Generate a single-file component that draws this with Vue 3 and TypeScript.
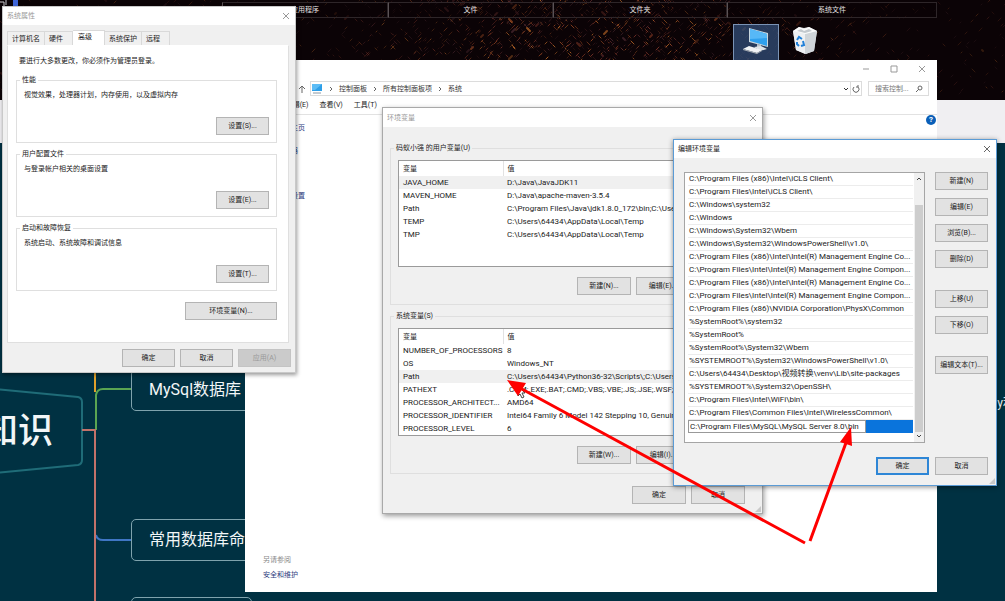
<script setup lang="ts">
import { ref } from 'vue'

interface Variable { name: string; value: string; selected?: boolean }
interface VariableGroup { legend: string; rows: Variable[]; actions: string[] }
interface Spark { d: string; color: string; opacity: number; width: number }

const fences = ['应用程序', '文件', '文件夹', '系统文件']

const tabs = ['计算机名', '硬件', '高级', '系统保护', '远程']
const activeTab = ref('高级')

const sections = [
  { title: '性能', text: '视觉效果，处理器计划，内存使用，以及虚拟内存', action: '设置(S)...' },
  { title: '用户配置文件', text: '与登录帐户相关的桌面设置', action: '设置(E)...' },
  { title: '启动和故障恢复', text: '系统启动、系统故障和调试信息', action: '设置(T)...' },
]

const groups: VariableGroup[] = [
  {
    legend: '码蚁小强 的用户变量(U)',
    rows: [
      { name: 'JAVA_HOME', value: 'D:\\Java\\JavaJDK11', selected: true },
      { name: 'MAVEN_HOME', value: 'D:\\Java\\apache-maven-3.5.4' },
      { name: 'Path', value: 'C:\\Program Files\\Java\\jdk1.8.0_172\\bin;C:\\Users' },
      { name: 'TEMP', value: 'C:\\Users\\64434\\AppData\\Local\\Temp' },
      { name: 'TMP', value: 'C:\\Users\\64434\\AppData\\Local\\Temp' },
    ],
    actions: ['新建(N)...', '编辑(E)...'],
  },
  {
    legend: '系统变量(S)',
    rows: [
      { name: 'NUMBER_OF_PROCESSORS', value: '8' },
      { name: 'OS', value: 'Windows_NT' },
      { name: 'Path', value: 'C:\\Users\\64434\\Python36-32\\Scripts\\;C:\\Users\\', selected: true },
      { name: 'PATHEXT', value: '.COM;.EXE;.BAT;.CMD;.VBS;.VBE;.JS;.JSE;.WSF;.W' },
      { name: 'PROCESSOR_ARCHITECT...', value: 'AMD64' },
      { name: 'PROCESSOR_IDENTIFIER', value: 'Intel64 Family 6 Model 142 Stepping 10, Genuine' },
      { name: 'PROCESSOR_LEVEL', value: '6' },
    ],
    actions: ['新建(W)...', '编辑(I)...'],
  },
]

const paths = [
  'C:\\Program Files (x86)\\Intel\\iCLS Client\\',
  'C:\\Program Files\\Intel\\iCLS Client\\',
  'C:\\Windows\\system32',
  'C:\\Windows',
  'C:\\Windows\\System32\\Wbem',
  'C:\\Windows\\System32\\WindowsPowerShell\\v1.0\\',
  'C:\\Program Files (x86)\\Intel\\Intel(R) Management Engine Co...',
  'C:\\Program Files\\Intel\\Intel(R) Management Engine Compon...',
  'C:\\Program Files (x86)\\Intel\\Intel(R) Management Engine Co...',
  'C:\\Program Files\\Intel\\Intel(R) Management Engine Compon...',
  'C:\\Program Files (x86)\\NVIDIA Corporation\\PhysX\\Common',
  '%SystemRoot%\\system32',
  '%SystemRoot%',
  '%SystemRoot%\\System32\\Wbem',
  '%SYSTEMROOT%\\System32\\WindowsPowerShell\\v1.0\\',
  'C:\\Users\\64434\\Desktop\\视频转换\\venv\\Lib\\site-packages',
  '%SYSTEMROOT%\\System32\\OpenSSH\\',
  'C:\\Program Files\\Intel\\WiFi\\bin\\',
  'C:\\Program Files\\Common Files\\Intel\\WirelessCommon\\',
]
const editedPath = ref('C:\\Program Files\\MySQL\\MySQL Server 8.0\\bin')

const editActions = [
  ['新建(N)', '编辑(E)', '浏览(B)...', '删除(D)'],
  ['上移(U)', '下移(O)'],
  ['编辑文本(T)...'],
]

const crumbs = ['控制面板', '所有控制面板项', '系统']
const menus = ['文件(F)', '编辑(E)', '查看(V)', '工具(T)']
const sideLinks = ['设备管理器', '远程设置', '系统保护', '高级系统设置']

// Wallpaper: short diagonal sparks, densest right of the middle.
function makeSparks(count: number): Spark[] {
  let seed = 71
  const rnd = () => {
    seed = (seed * 16807) % 2147483647
    return seed / 2147483647
  }
  const palette = ['#7a3420', '#9c4a22', '#5d2a2c', '#c9702a', '#4a2830', '#8a3a2e']
  const out: Spark[] = []
  while (out.length < count) {
    const x = Math.round(rnd() * 1005)
    const y = Math.round(rnd() * 100)
    const density = 0.12 + Math.exp(-(((x - 590) / 180) ** 2))
    if (rnd() > density) continue
    const len = 1 + Math.round(rnd() * 2)
    const dir = rnd() > 0.4 ? 1 : -1
    out.push({
      d: `M${x} ${y}l${len * dir} ${-len}`,
      color: palette[Math.floor(rnd() * palette.length)],
      opacity: 0.2 + rnd() * 0.6 * Math.min(1, density),
      width: rnd() > 0.95 ? 2 : 1,
    })
  }
  return out
}
const sparks = makeSparks(2200)
</script>

<template>
  <main class="desktop">
    <header class="wallpaper">
      <svg class="sparks" viewBox="0 0 1005 100" preserveAspectRatio="none" aria-hidden="true">
        <path v-for="(s, i) in sparks" :key="i" :d="s.d" :stroke="s.color" :stroke-opacity="s.opacity" :stroke-width="s.width" stroke-linecap="round" />
        <path d="M0 2h4v4M6 0v5" stroke="#c8c8cc" fill="none" />
        <path d="M13 0h5v6h-5z" fill="#3f66d8" />
      </svg>
      <div class="fences">
        <div v-for="f in fences" :key="f" class="fence">{{ f }}</div>
      </div>
      <div class="icons">
        <div class="shortcut selected">
          <svg width="30" height="28" viewBox="0 0 30 28" aria-label="此电脑" role="img">
            <path d="M8 1l19 5v14L8 15z" fill="#c9d6de" />
            <path d="M9 2l17 5v12L9 14z" fill="#2fa0ee" />
            <path d="M9 2l17 5v4L9 12z" fill="#57b8f7" />
            <path d="M16 17l4 1v3l-4-1z" fill="#b9c3ca" />
            <path d="M13 20l7-1 6 3-7 2z" fill="#dfe4e8" />
            <path d="M2 22l6-3 13 4-5 3z" fill="#f1f3f5" />
            <path d="M2 22l14 4 5-3v1l-5 3L2 23z" fill="#a7adb3" />
          </svg>
        </div>
        <div class="shortcut">
          <svg width="26" height="28" viewBox="0 0 26 28" aria-label="回收站" role="img">
            <path d="M1 5l6-4 5 1 5-1 8 4-3 20-8 3-10-4z" fill="#dfe3e6" />
            <path d="M1 5l12 3v20L4 24z" fill="#eef0f2" />
            <path d="M13 8l12-3-3 20-9 3z" fill="#d0d5d9" />
            <path d="M1 5l6-4 5 2 5-2 8 4-12 3z" fill="#fafbfb" />
            <path d="M5 5l4-2 3 2 5-2 3 2-7 2z" fill="#c3c9ce" />
            <g fill="none" stroke="#2280d8" stroke-width="2"><path d="M5 14l2-3 3 2" /><path d="M11 15l1 4-3 1" /><path d="M7 20l-2-2v-2" /></g>
          </svg>
        </div>
      </div>
    </header>
    <div class="strip"></div>

    <section class="mindmap">
      <svg class="links" width="260" height="458" viewBox="0 143 260 458" fill="none" stroke-width="2" aria-hidden="true">
        <path d="M-4 389L78 397Q82 398 82 402V460Q82 464 78 465L-4 473" stroke="#1f6c78" />
        <path d="M95 143V392" stroke="#e0a12c" />
        <path d="M96 430V395Q97 389 103 389H131" stroke="#5aa552" />
        <path d="M96 535Q97 540 103 540H131" stroke="#3f76c4" />
        <path d="M82 430H96M95 430V601" stroke="#c2726a" />
      </svg>
      <div class="root-node">知识</div>
      <div class="node mysql">MySql数据库</div>
      <div class="node commands">常用数据库命令</div>
      <div class="node next"></div>
      <div class="edge-node">y利</div>
    </section>

    <section class="window explorer" aria-label="系统">
      <div class="explorer-title">
        <button aria-label="最小化"><svg viewBox="0 0 8 8"><path d="M1 4h6" /></svg></button>
        <button aria-label="最大化"><svg viewBox="0 0 8 8"><path d="M1 1h6v6h-6z" /></svg></button>
        <button aria-label="关闭"><svg viewBox="0 0 8 8"><path d="M1 1l6 6M7 1l-6 6" /></svg></button>
      </div>
      <div class="address-row">
        <button class="up" aria-label="上移"><svg viewBox="0 0 8 8"><path d="M4 8V1M1 4l3-3 3 3" /></svg></button>
        <nav class="address">
          <svg class="pc" viewBox="0 0 12 10" aria-hidden="true"><rect x="1" y="0" width="10" height="7" fill="#2e9fe8" /><path d="M1 0h10L4 6H1z" fill="#5cbcf5" /><path d="M2 9h8" stroke="#8a97a3" /></svg>
          <template v-for="c in crumbs" :key="c">
            <svg class="sep" viewBox="0 0 4 6"><path d="M1 1l2 2-2 2" /></svg>
            <a href="#">{{ c }}</a>
          </template>
          <svg class="drop" viewBox="0 0 6 6"><path d="M1 2l2 2 2-2" /></svg>
          <button class="refresh" aria-label="刷新"><svg viewBox="0 0 8 8"><path d="M2 2a3 3 0 1 0 4 0M6 2v-2M6 2h-2" /></svg></button>
        </nav>
        <label class="search">
          <input type="text" placeholder="搜索控制..." aria-label="搜索控制面板">
          <svg viewBox="0 0 8 8" aria-hidden="true"><circle cx="5" cy="3" r="2" /><path d="M4 4L1 7" /></svg>
        </label>
      </div>
      <div class="menu-row"><button v-for="m in menus" :key="m">{{ m }}</button></div>
      <div class="explorer-body">
        <aside>
          <a class="home" href="#">控制面板主页</a>
          <a v-for="l in sideLinks" :key="l" href="#">{{ l }}</a>
          <p>另请参阅</p>
          <a href="#">安全和维护</a>
        </aside>
        <button class="help" aria-label="帮助">?</button>
      </div>
    </section>

    <section class="window properties" aria-label="系统属性">
      <div class="title inactive"><span>系统属性</span><button aria-label="关闭"><svg viewBox="0 0 8 8"><path d="M1 1l6 6M7 1l-6 6" /></svg></button></div>
      <div class="tabs" role="tablist">
        <button v-for="t in tabs" :key="t" role="tab" :aria-selected="t === activeTab" :class="{ active: t === activeTab }" @click="activeTab = t">{{ t }}</button>
      </div>
      <div class="panel">
        <p>要进行大多数更改，你必须作为管理员登录。</p>
        <fieldset v-for="s in sections" :key="s.title">
          <legend>{{ s.title }}</legend>
          <div class="description">{{ s.text }}</div>
          <button class="btn">{{ s.action }}</button>
        </fieldset>
        <button class="btn env">环境变量(N)...</button>
      </div>
      <footer><button class="btn">确定</button><button class="btn">取消</button><button class="btn" disabled>应用(A)</button></footer>
    </section>

    <section class="window variables" aria-label="环境变量">
      <div class="title inactive"><span>环境变量</span><button aria-label="关闭"><svg viewBox="0 0 8 8"><path d="M1 1l6 6M7 1l-6 6" /></svg></button></div>
      <div class="variables-body">
        <fieldset v-for="g in groups" :key="g.legend">
          <legend>{{ g.legend }}</legend>
          <div class="list">
            <table>
              <thead><tr><th scope="col">变量</th><th scope="col">值</th></tr></thead>
              <tbody>
                <tr v-for="r in g.rows" :key="r.name" :class="{ selected: r.selected }"><td>{{ r.name }}</td><td>{{ r.value }}</td></tr>
              </tbody>
            </table>
          </div>
          <div class="actions"><button v-for="a in g.actions" :key="a" class="btn">{{ a }}</button></div>
        </fieldset>
        <footer><button class="btn">确定</button><button class="btn">取消</button></footer>
      </div>
      <svg class="grip" viewBox="0 0 6 6" aria-hidden="true"><path d="M6 0v6H0z" /></svg>
    </section>

    <section class="window editor" aria-label="编辑环境变量">
      <div class="title"><span>编辑环境变量</span><button aria-label="关闭"><svg viewBox="0 0 8 8"><path d="M1 1l6 6M7 1l-6 6" /></svg></button></div>
      <div class="editor-body">
        <div class="path-list">
          <ul>
            <li v-for="(p, i) in paths" :key="i">{{ p }}</li>
            <li class="editing"><input v-model="editedPath" type="text" aria-label="路径"></li>
          </ul>
          <div class="scrollbar">
            <svg viewBox="0 0 8 8"><path d="M2 5l2-2 2 2" /></svg>
            <div class="thumb"></div>
            <svg viewBox="0 0 8 8"><path d="M2 3l2 2 2-2" /></svg>
          </div>
        </div>
        <div class="editor-actions">
          <div v-for="(set, i) in editActions" :key="i"><button v-for="a in set" :key="a" class="btn">{{ a }}</button></div>
        </div>
      </div>
      <footer><button class="btn primary">确定</button><button class="btn">取消</button></footer>
      <svg class="grip" viewBox="0 0 6 6" aria-hidden="true"><path d="M6 0v6H0z" /></svg>
    </section>

    <svg class="annotations" width="1005" height="601" viewBox="0 0 1005 601" aria-hidden="true">
      <path d="M518 386v10l2-2 2 4 2-1-2-4h3z" fill="#fff" stroke="#444" />
      <path d="M805 543L520 388M810 541L847 440" stroke="#fe0000" stroke-width="3" />
      <path d="M507 380l19 3-8 13zM851 427l1 19-12-4z" fill="#fe0000" />
    </svg>
  </main>
</template>

<style>
html, body { margin: 0; }
</style>

<style scoped>
* { box-sizing: border-box; }
.desktop {
  position: relative;
  display: flex;
  flex-direction: column;
  min-height: 100vh;
  overflow: hidden;
  background: #003142;
  color: #222;
  font: 7px/10px Roboto, "Noto Sans CJK SC", sans-serif;
}
button { padding: 0; border: 0; background: none; color: inherit; font: inherit; white-space: nowrap; }
p, ul { margin: 0; padding: 0; list-style: none; }
a { color: inherit; text-decoration: none; }
svg { display: block; }

.wallpaper { position: relative; height: 100px; background: #0b0306; overflow: hidden; }
.sparks { position: absolute; inset: 0; width: 100%; height: 100%; }
.fences {
  position: relative;
  display: grid;
  grid-template-columns: 166fr 165fr 174fr 210fr;
  margin: 2px 68px 0 222px;
  color: #e4e0e0;
}
.fence { height: 16px; border: 1px solid #2e2629; border-left-color: #5a5255; background: #0b030666; line-height: 14px; text-align: center; }
.icons { position: relative; display: flex; justify-content: flex-end; gap: 8px; margin: 6px 182px 0 0; }
.shortcut { display: flex; justify-content: center; width: 36px; padding-top: 2px; }
.shortcut.selected { width: 46px; height: 60px; border: 1px solid #7a93b5; background: #2f4a72cc; }
.strip { height: 43px; background: #f0eff2; }

.mindmap { position: relative; flex: 1; color: #f2f6f7; font-size: 16px; line-height: 20px; }
.links { position: absolute; left: 0; top: 0; }
.root-node { position: absolute; left: -17px; top: 266px; font-size: 35px; font-weight: 500; line-height: 46px; }
.node { position: absolute; left: 131px; width: 121px; height: 42px; padding: 10px 0 0 17px; border: 1px solid #7fa3ad; border-radius: 5px; white-space: nowrap; }
.mysql { top: 226px; }
.commands { top: 376px; }
.next { top: 454px; }
.edge-node { position: absolute; right: -10px; top: 250px; font-size: 12px; white-space: nowrap; }

.window { position: absolute; display: flex; flex-direction: column; }
.title { display: flex; justify-content: space-between; align-items: center; height: 18px; padding: 0 5px 0 4px; background: #fff; }
.title.inactive { color: #999; }
.title svg, .explorer-title svg, .up svg, .refresh svg { width: 8px; height: 8px; }
.title svg, .explorer-title svg, .up svg, .sep, .drop, .refresh svg, .search svg { fill: none; stroke: #666; }
.title.inactive svg, .explorer-title svg { stroke: #999; }
fieldset { min-width: 0; margin: 0; padding: 0; border: 1px solid #dfdfdf; }
legend { margin-left: -4px; padding: 0 2px; }
.btn { display: inline-block; width: 54px; height: 18px; border: 1px solid #b4b4b4; background: #e2e2e2; text-align: center; line-height: 16px; }
.btn:disabled { border-color: #c4c4c4; background: #cbcbcb; color: #999; }
.btn.primary { border: 2px solid #2e86d6; line-height: 14px; }
.grip { position: absolute; right: 1px; bottom: 1px; width: 6px; height: 6px; fill: #c9c9c9; }

.explorer { left: 245px; right: 68px; top: 60px; bottom: 9px; background: #fff; }
.explorer-title { display: flex; justify-content: flex-end; gap: 20px; height: 21px; padding: 5px 11px 0 0; }
.explorer-title button { height: 8px; }
.address-row { display: flex; height: 15px; padding: 0 8px 0 53px; color: #333; }
.up { width: 12px; }
.address { display: flex; flex: 1; align-items: center; gap: 6px; border: 1px solid #dcdcdc; }
.pc { width: 12px; height: 10px; }
.sep { width: 4px; height: 6px; }
.drop { width: 6px; height: 6px; margin-left: auto; }
.drop path { stroke: #333; }
.refresh { display: flex; justify-content: center; align-items: center; align-self: stretch; width: 11px; margin-left: -5px; border-left: 1px solid #dcdcdc; }
.search { display: flex; align-items: center; width: 61px; margin-left: 6px; padding: 0 5px 0 6px; border: 1px solid #dcdcdc; }
.search input { flex: 1; min-width: 0; padding: 0; border: 0; outline: 0; background: none; font: inherit; }
.search input::placeholder { color: #777; opacity: 1; }
.search svg { width: 8px; height: 8px; }
.menu-row { display: flex; gap: 11px; height: 19px; padding: 4px 0 0 7px; border-bottom: 1px solid #e2e2e2; }
.menu-row button { height: 10px; }
.explorer-body { display: flex; flex: 1; justify-content: space-between; align-items: stretch; color: #2b3a7c; }
aside { display: flex; flex-direction: column; gap: 5px; padding: 8px 0 12px 18px; }
aside .home { margin-bottom: 8px; }
aside p { margin-top: auto; color: #888; }
.help { width: 10px; height: 10px; margin: 0 1px; border-radius: 5px; background: #0a5fb8; color: #fff; font-size: 8px; font-weight: 700; line-height: 10px; }

.properties { left: 2px; top: 6px; width: 294px; background: #f0f0f0; border: 1px solid #c9c9c9; box-shadow: 1px 2px 4px #0006; }
.tabs { display: flex; align-items: flex-end; height: 20px; padding: 5px 4px 0; }
.tabs button { height: 14px; padding: 0 4px; border: 1px solid #d9d9d9; border-bottom: 0; border-left-width: 0; background: #f0f0f0; }
.tabs button:first-child { border-left-width: 1px; }
.tabs button:nth-child(2), .tabs button:last-child { padding: 0 9px 0 4px; }
.tabs .active { height: 15px; padding: 0 12px 2px 5px; background: #fff; }
.panel { display: flex; flex-direction: column; gap: 6px; margin: 0 6px 6px 4px; padding: 10px 11px 22px 8px; border: 1px solid #dfdfdf; border-top-color: #fff; background: #fff; }
.panel p { margin: 0 0 3px 3px; }
.panel fieldset { padding: 5px 7px 7px; }
.panel fieldset .btn { display: block; margin: 17px 0 0 auto; }
.properties .btn { width: 53px; }
.panel .btn.env { align-self: flex-end; width: 92px; margin-top: 5px; }
footer { display: flex; justify-content: flex-end; gap: 5px; }
.properties footer { padding: 0 4px 5px; }

.variables { left: 382px; top: 107px; width: 381px; background: #f0f0f0; border: 1px solid #a9a9a9; box-shadow: 1px 2px 5px #0006; }
.variables .title { height: 19px; }
.variables-body { display: flex; flex-direction: column; gap: 6px; padding: 16px 7px 9px; }
.variables fieldset { padding: 7px 7px 9px; }
.list { min-height: 107px; border: 1px solid #9a9a9a; background: #fff; overflow: hidden; }
table { width: 100%; table-layout: fixed; border-collapse: collapse; }
th { height: 15px; padding: 0 4px; font-weight: 400; text-align: left; }
th:first-child { width: 104px; border-right: 1px solid #e2e2e2; }
td { height: 13px; padding: 0 0 0 4px; overflow: hidden; white-space: nowrap; font-size: 8px; line-height: 12px; }
tr.selected { background: #f0f0f0; }
.actions { display: flex; justify-content: flex-end; gap: 5px; padding: 10px 57px 0 0; }
.variables footer { padding: 6px 10px 0 0; }

.editor { left: 673px; top: 139px; width: 324px; background: #f0f0f0; border: 1px solid #5b9bd5; box-shadow: 0 1px 5px #0007; }
.editor-body { display: flex; gap: 10px; padding: 14px 8px 0 10px; }
.path-list { display: flex; flex: 1; min-width: 0; border: 1px solid #a5a5a5; background: #fff; }
.path-list ul { flex: 1; min-width: 0; padding: 0 1px 9px 3px; font-size: 8px; }
.path-list li { height: 13px; padding-left: 1px; border-bottom: 1px solid #ececec; line-height: 12px; white-space: nowrap; }
.path-list .editing { display: flex; padding: 0; border: 0; background: #0a74dc; }
.editing input { width: 178px; height: 13px; padding: 0 1px; border: 1px solid #999; outline: 0; background: #fff; color: inherit; font: inherit; }
.scrollbar { display: flex; flex-direction: column; align-items: center; justify-content: space-between; width: 10px; padding: 2px 0; background: #f0f0f0; }
.scrollbar svg { width: 8px; height: 8px; fill: none; stroke: #444; }
.thumb { flex: 1; align-self: stretch; margin: 22px 1px 0; background: #cdcdcd; }
.editor-actions { display: flex; flex-direction: column; gap: 22px; }
.editor-actions div { display: flex; flex-direction: column; gap: 8px; }
.editor .btn { width: 53px; }
.editor footer { gap: 6px; padding: 14px 8px 10px; }

.annotations { position: absolute; left: 0; top: 0; fill: none; pointer-events: none; }
</style>
